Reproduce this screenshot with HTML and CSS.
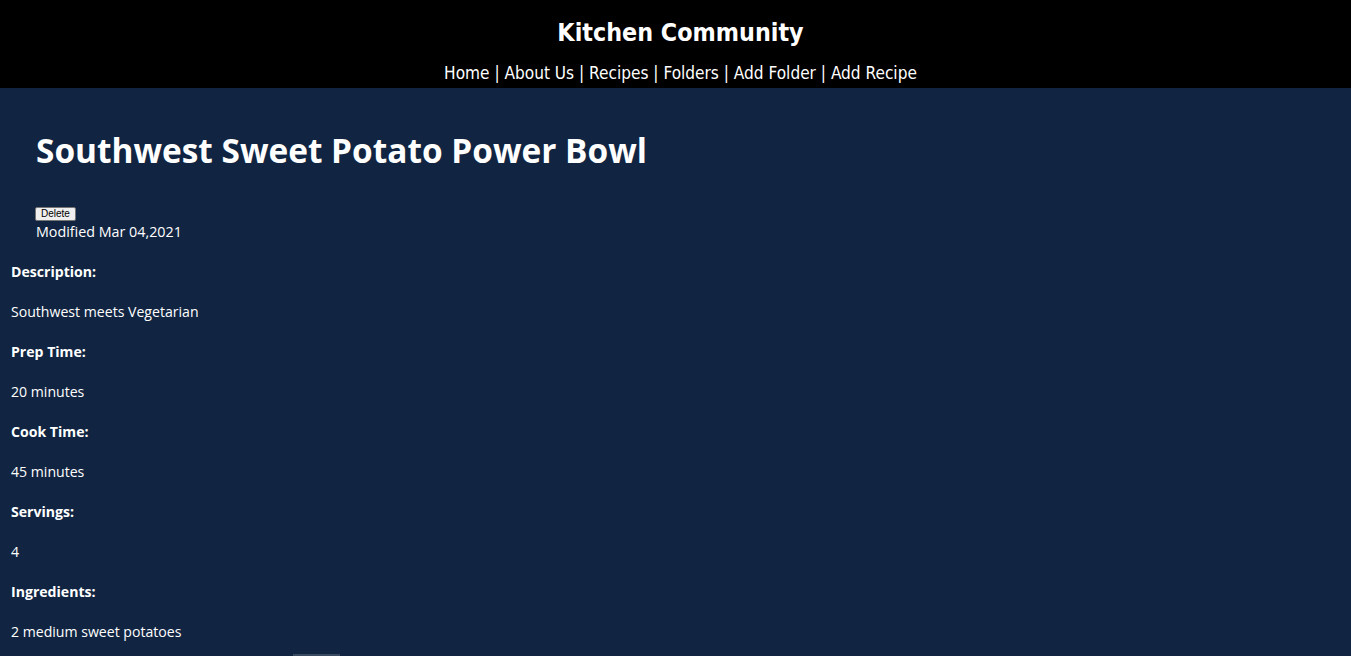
FILE: index.html
```html
<!DOCTYPE html>
<html lang="en">
<head>
<meta charset="utf-8">
<title>Kitchen Community</title>
<link rel="stylesheet" href="styles.css">
</head>
<body>
<header class="site-header">
  <div class="brand">Kitchen Community</div>
  <nav class="nav">
    <a href="#">Home</a> | <a href="#">About Us</a> | <a href="#">Recipes</a> | <a href="#">Folders</a> | <a href="#">Add Folder</a> | <a href="#">Add Recipe</a>
  </nav>
</header>
<main class="page">
  <section class="recipe-head">
    <h1 class="recipe-title">Southwest Sweet Potato Power Bowl</h1>
    <button class="delete-btn" type="button">Delete</button>
    <div class="modified">Modified Mar 04,2021</div>
  </section>
  <section class="details">
    <p class="label">Description:</p>
    <p class="value">Southwest meets Vegetarian</p>
    <p class="label">Prep Time:</p>
    <p class="value">20 minutes</p>
    <p class="label">Cook Time:</p>
    <p class="value">45 minutes</p>
    <p class="label">Servings:</p>
    <p class="value">4</p>
    <p class="label">Ingredients:</p>
    <p class="value">2 medium sweet potatoes</p>
    <div class="next-row"><span class="next-item"></span></div>
  </section>
</main>
</body>
</html>
```
FILE: styles.css
```css
html, body {
  margin: 0;
  padding: 0;
}
body {
  background: #112542;
  color: #ffffff;
  font-family: "Open Sans", "Noto Sans", sans-serif;
}
.site-header {
  background: #000000;
  height: 88px;
  text-align: center;
  box-sizing: border-box;
  padding: 17px 0 0 10px;
  font-family: "DejaVu Sans", sans-serif;
  font-stretch: condensed;
}
.brand {
  font-size: 24.8px;
  font-weight: bold;
  line-height: 32px;
}
.nav {
  margin-top: 14px;
  font-size: 17.1px;
  line-height: 20px;
}
.nav a {
  color: #ffffff;
  text-decoration: none;
}
.page {
  padding: 0 0 0 11px;
}
.recipe-head {
  padding: 40px 0 0 25px;
}
.recipe-title {
  margin: 0;
  font-family: "Open Sans", sans-serif;
  font-weight: 700;
  font-size: 33.4px;
  line-height: 44px;
}
.delete-btn {
  display: block;
  margin: 35px 0 0 -1px;
  font-family: "Liberation Sans", Arial, sans-serif;
  font-size: 10px;
  padding: 1px 5px;
  height: 14px;
  line-height: 10px;
  background: #efefef;
  color: #000;
  border: 1px solid #767676;
  border-radius: 2px;
}
.modified {
  font-size: 14.3px;
  line-height: 20px;
  margin-top: 1px;
}
.details {
  padding-top: 10px;
}
.details p {
  margin: 0;
  font-size: 14.1px;
  line-height: 20px;
  padding: 10px 0;
}
.label {
  font-weight: 700;
}
.next-row {
  padding: 2px 0 0 282px;
}
.next-item {
  display: inline-block;
  width: 47px;
  height: 20px;
  background: #3a4a60;
}
```
